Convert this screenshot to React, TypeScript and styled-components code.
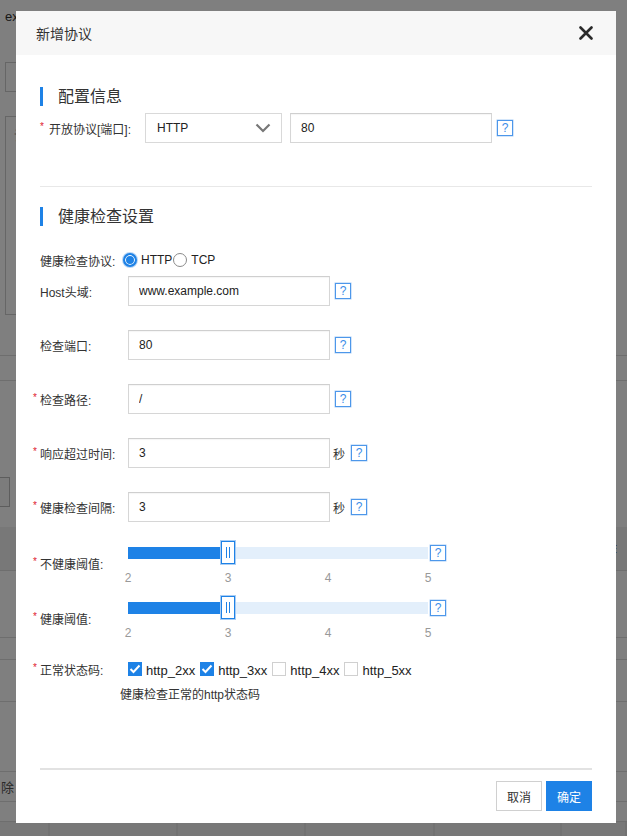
import { Fragment } from "react";
import styled, { createGlobalStyle } from "styled-components";

/* --- CSS --- */
const GlobalStyle = createGlobalStyle`
  html, body {
    margin: 0;
    padding: 0;
  }
  body {
    font-family: "Liberation Sans", "Noto Sans CJK SC", sans-serif;
    color: #333;
  }
  * {
    box-sizing: border-box;
  }
`;

const BLUE = "#1e82e6";

/* --- page behind the dialog --- */
const Page = styled.div`
  position: relative;
  height: 836px;
  overflow: hidden;
  background: #fff;
`;

const PageTop = styled.div`
  height: 62px;
  padding: 9px 5px 0;
  font-size: 13px;
  line-height: 16px;
`;

const SearchBox = styled.div`
  margin-left: 5px;
  width: 300px;
  height: 30px;
  border: 1px solid #ccc;
`;

const Remark = styled.div`
  margin: 24px 0 0 5px;
  width: 400px;
  height: 199px;
  border: 1px solid #ccc;
  padding: 8px;
  font-size: 13px;
  color: #999;
`;

const ListHead = styled.div`
  margin-top: 40px;
  height: 26px;
  border-top: 1px solid #ddd;
  border-bottom: 1px solid #ddd;
`;

const AddButton = styled.div`
  margin: 96px 0 0 -70px;
  width: 80px;
  height: 30px;
  border: 1px solid #bbb;
  background: #f8f8f8;
`;

const Table = styled.div`
  margin-top: 20px;
  display: flex;
  flex-direction: column;
`;

const TableRow = styled.div<{ $h: number; $shade?: boolean; $cols?: boolean }>`
  height: ${(p) => p.$h}px;
  display: grid;
  grid-template-columns: 50px 128px 128px 129px 127px 1fr;
  align-items: center;
  font-size: 13px;
  color: #555;
  background: ${(p) => (p.$shade ? "#f0f0f0" : "#fff")};
  border-bottom: 1px solid #ddd;

  & > span {
    height: 100%;
    display: flex;
    align-items: center;
    border-right: ${(p) => (p.$cols ? "2px solid #e4e4e4" : "none")};
  }
`;

const HeadCell = styled.span`
  padding-left: 29px;
`;

const LinkCell = styled.span`
  padding-left: 1px;
`;

/* --- dialog --- */
const Overlay = styled.div`
  position: fixed;
  inset: 0;
  background: rgba(0, 0, 0, 0.5);
  padding: 11px 0 0 16px;
`;

const Modal = styled.div`
  width: 600px;
  background: #fff;
  display: flex;
  flex-direction: column;
`;

const Header = styled.div`
  height: 44px;
  background: #f7f7f7;
  display: flex;
  align-items: center;
  justify-content: space-between;
  padding: 0 23px 0 20px;
  font-size: 14px;
  color: #333;
`;

const Body = styled.div`
  padding: 0 24px;
  display: flex;
  flex-direction: column;
`;

const SectionTitle = styled.div<{ $mt: number }>`
  margin-top: ${(p) => p.$mt}px;
  height: 19px;
  line-height: 19px;
  border-left: 3px solid ${BLUE};
  padding-left: 15px;
  font-size: 16px;
  color: #333;
`;

const Row = styled.div<{ $mt: number; $h?: number }>`
  margin-top: ${(p) => p.$mt}px;
  height: ${(p) => p.$h ?? 30}px;
  display: flex;
  align-items: center;
  font-size: 12px;
`;

const Label = styled.div<{ $w: number }>`
  width: ${(p) => p.$w}px;
  flex-shrink: 0;
  display: flex;
  align-items: center;
  font-size: 12px;
  color: #333;
  white-space: nowrap;
`;

const Star = styled.span<{ $outside?: boolean }>`
  flex-shrink: 0;
  color: #e0202f;
  font-size: 10px;
  line-height: 10px;
  width: ${(p) => (p.$outside ? 7 : 9)}px;
  margin-left: ${(p) => (p.$outside ? -7 : 0)}px;
  margin-top: -2px;
`;

const Select = styled.div`
  width: 137px;
  height: 30px;
  border: 1px solid #d9d9d9;
  display: flex;
  align-items: center;
  justify-content: space-between;
  padding: 0 10px 0 11px;
  font-size: 12px;
  color: #222;
  margin-right: 8px;
`;

const Input = styled.input<{ $w?: number }>`
  width: ${(p) => p.$w ?? 202}px;
  height: 30px;
  border: 1px solid #d6d6d6;
  border-top-color: #cfcfcf;
  box-shadow: inset 0 1px 1px rgba(0, 0, 0, 0.04);
  padding: 0 10px;
  font-family: inherit;
  font-size: 12px;
  color: #222;
  outline: none;
  margin: 0;
`;

const Help = styled.span<{ $ml?: number }>`
  width: 16px;
  height: 16px;
  flex-shrink: 0;
  margin-left: ${(p) => p.$ml ?? 5}px;
  border: 1px solid #4d97ea;
  box-shadow: 0 0 0 0.5px #a9cdf4;
  color: #3d8ee8;
  font-size: 12px;
  line-height: 14px;
  text-align: center;
`;

const Unit = styled.span`
  margin-left: 3px;
  font-size: 12px;
  color: #333;
`;

const Divider = styled.div<{ $mt: number; $h?: number; $c?: string }>`
  margin-top: ${(p) => p.$mt}px;
  height: ${(p) => p.$h ?? 1}px;
  background: ${(p) => p.$c ?? "#e8e8e8"};
`;

const RadioGroup = styled.div`
  display: flex;
  align-items: center;
  font-size: 12px;
`;

const Radio = styled.span<{ $on?: boolean }>`
  width: 14px;
  height: 14px;
  border-radius: 50%;
  margin-right: 4px;
  background: ${(p) => (p.$on ? BLUE : "#fff")};
  border: ${(p) => (p.$on ? `2px solid ${BLUE}` : "1px solid #8a8a8a")};
  box-shadow: ${(p) => (p.$on ? "inset 0 0 0 1px #fff, 0 0 0 1px #b9d6f6" : "none")};
`;

const RadioText = styled.span`
  margin-right: 1px;
  color: #222;
`;

const SliderRow = styled.div<{ $mt: number }>`
  margin-top: ${(p) => p.$mt}px;
  display: flex;
  align-items: center;
`;

const SliderBlock = styled.div`
  display: flex;
  flex-direction: column;
`;

const TrackLine = styled.div`
  display: flex;
  align-items: center;
  height: 23px;
`;

const Track = styled.div`
  position: relative;
  width: 300px;
  height: 12px;
  background: #e3effb;
`;

const Fill = styled.div`
  height: 100%;
  background: ${BLUE};
`;

const Handle = styled.div`
  position: absolute;
  top: -6px;
  width: 14px;
  height: 23px;
  background: #fff;
  border: 1px solid ${BLUE};
  box-shadow: 0 0 0 1px #a9cdf4;
  display: flex;
  align-items: center;
  justify-content: center;
  gap: 2px;

  &::before,
  &::after {
    content: "";
    width: 1px;
    height: 11px;
    background: ${BLUE};
  }
`;

const Ticks = styled.div`
  margin: 7px 0 0 -50px;
  display: grid;
  grid-template-columns: repeat(4, 100px);
  font-size: 12px;
  line-height: 14px;
  color: #999;
  text-align: center;
`;

const Checks = styled.div`
  display: flex;
  align-items: center;
  font-size: 13px;
  color: #222;
`;

const CheckBox = styled.span<{ $on?: boolean }>`
  width: 14px;
  height: 14px;
  margin-right: 4px;
  display: flex;
  align-items: center;
  justify-content: center;
  background: ${(p) => (p.$on ? BLUE : "#fff")};
  border: 1px solid ${(p) => (p.$on ? BLUE : "#d0d0d0")};
`;

const CheckText = styled.span`
  margin-right: 5px;
  margin-top: 2px;
`;

const HelpText = styled.div`
  margin-top: 11px;
  padding-left: 80px;
  font-size: 12px;
  line-height: 14px;
  color: #333;
`;

const Footer = styled.div`
  margin: 11px 24px 12px;
  display: flex;
  justify-content: flex-end;
  gap: 4px;
`;

const Button = styled.button<{ $primary?: boolean }>`
  width: 46px;
  height: 30px;
  padding: 0;
  font-family: inherit;
  font-size: 12px;
  color: ${(p) => (p.$primary ? "#fff" : "#333")};
  background: ${(p) => (p.$primary ? BLUE : "#fff")};
  border: 1px solid ${(p) => (p.$primary ? BLUE : "#d0d0d0")};
`;

/* --- parts --- */
const ChevronDown = () => (
  <svg width="16" height="10" viewBox="0 0 16 10">
    <polyline points="1.5,1.5 8,8 14.5,1.5" fill="none" stroke="#777" strokeWidth="2.2" />
  </svg>
);

const CloseIcon = () => (
  <svg width="14" height="14" viewBox="0 0 14 14">
    <path d="M1.5 1.5 L12.5 12.5 M12.5 1.5 L1.5 12.5" stroke="#2a2a2a" strokeWidth="2.6" strokeLinecap="round" />
  </svg>
);

const CheckMark = () => (
  <svg width="12" height="10" viewBox="0 0 12 10">
    <polyline points="1.5,5 4.5,8 10.5,1.5" fill="none" stroke="#fff" strokeWidth="2" />
  </svg>
);

const Slider = ({ min, max, value }: { min: number; max: number; value: number }) => {
  const ticks = [];
  for (let i = min; i <= max; i++) ticks.push(i);
  const left = ((value - min) / (max - min)) * 300 - 7;
  return (
    <SliderBlock>
      <TrackLine>
        <Track>
          <Fill style={{ width: left }} />
          <Handle style={{ left }} />
        </Track>
        <Help $ml={2}>?</Help>
      </TrackLine>
      <Ticks>
        {ticks.map((t) => (
          <span key={t}>{t}</span>
        ))}
      </Ticks>
    </SliderBlock>
  );
};

const fields = [
  { label: "检查端口:", value: "80", required: false, unit: "" },
  { label: "检查路径:", value: "/", required: true, unit: "" },
  { label: "响应超过时间:", value: "3", required: true, unit: "秒" },
  { label: "健康检查间隔:", value: "3", required: true, unit: "秒" },
];

const codes = [
  { name: "http_2xx", on: true },
  { name: "http_3xx", on: true },
  { name: "http_4xx", on: false },
  { name: "http_5xx", on: false },
];

function App() {
  return (
    <>
      <GlobalStyle />
      <Page>
        <PageTop>example.com</PageTop>
        <SearchBox />
        <Remark>请输入备注</Remark>
        <ListHead />
        <AddButton />
        <Table>
          <TableRow $h={44} $shade>
            <span />
            <span />
            <span />
            <span />
            <span />
            <HeadCell>操作</HeadCell>
          </TableRow>
          <TableRow $h={67} />
          <TableRow $h={22} />
          <TableRow $h={42} />
          <TableRow $h={70} />
          <TableRow $h={30}>
            <LinkCell>除</LinkCell>
          </TableRow>
          <TableRow $h={20} />
          <TableRow $h={30} $shade $cols>
            <span />
            <span />
            <span />
            <span />
            <span />
            <span />
          </TableRow>
        </Table>
      </Page>

      <Overlay>
        <Modal>
          <Header>
            <span>新增协议</span>
            <CloseIcon />
          </Header>

          <Body>
            <SectionTitle $mt={32}>配置信息</SectionTitle>
            <Row $mt={7}>
              <Label $w={105}>
                <Star>*</Star>
                <span>开放协议[端口]:</span>
              </Label>
              <Select>
                <span>HTTP</span>
                <ChevronDown />
              </Select>
              <Input defaultValue="80" />
              <Help>?</Help>
            </Row>

            <Divider $mt={43} />

            <SectionTitle $mt={20}>健康检查设置</SectionTitle>
            <Row $mt={24} $h={20}>
              <Label $w={83}>健康检查协议:</Label>
              <RadioGroup>
                <Radio $on />
                <RadioText>HTTP</RadioText>
                <Radio />
                <RadioText>TCP</RadioText>
              </RadioGroup>
            </Row>
            <Row $mt={6}>
              <Label $w={88}>Host头域:</Label>
              <Input defaultValue="www.example.com" />
              <Help>?</Help>
            </Row>

            {fields.map((f) => (
              <Row key={f.label} $mt={24}>
                <Label $w={88}>
                  {f.required && <Star $outside>*</Star>}
                  <span>{f.label}</span>
                </Label>
                <Input defaultValue={f.value} />
                {f.unit && <Unit>{f.unit}</Unit>}
                <Help $ml={f.unit ? 6 : 5}>?</Help>
              </Row>
            ))}

            <SliderRow $mt={19}>
              <Label $w={88}>
                <Star $outside>*</Star>
                <span>不健康阈值:</span>
              </Label>
              <Slider min={2} max={5} value={3} />
            </SliderRow>
            <SliderRow $mt={11}>
              <Label $w={88}>
                <Star $outside>*</Star>
                <span>健康阈值:</span>
              </Label>
              <Slider min={2} max={5} value={3} />
            </SliderRow>

            <Row $mt={21} $h={16}>
              <Label $w={88}>
                <Star $outside>*</Star>
                <span>正常状态码:</span>
              </Label>
              <Checks>
                {codes.map((c) => (
                  <Fragment key={c.name}>
                    <CheckBox $on={c.on}>{c.on && <CheckMark />}</CheckBox>
                    <CheckText>{c.name}</CheckText>
                  </Fragment>
                ))}
              </Checks>
            </Row>
            <HelpText>健康检查正常的http状态码</HelpText>

            <Divider $mt={66} $h={2} $c="#e2e2e2" />
          </Body>

          <Footer>
            <Button>取消</Button>
            <Button $primary>确定</Button>
          </Footer>
        </Modal>
      </Overlay>
    </>
  );
}

export default App;
